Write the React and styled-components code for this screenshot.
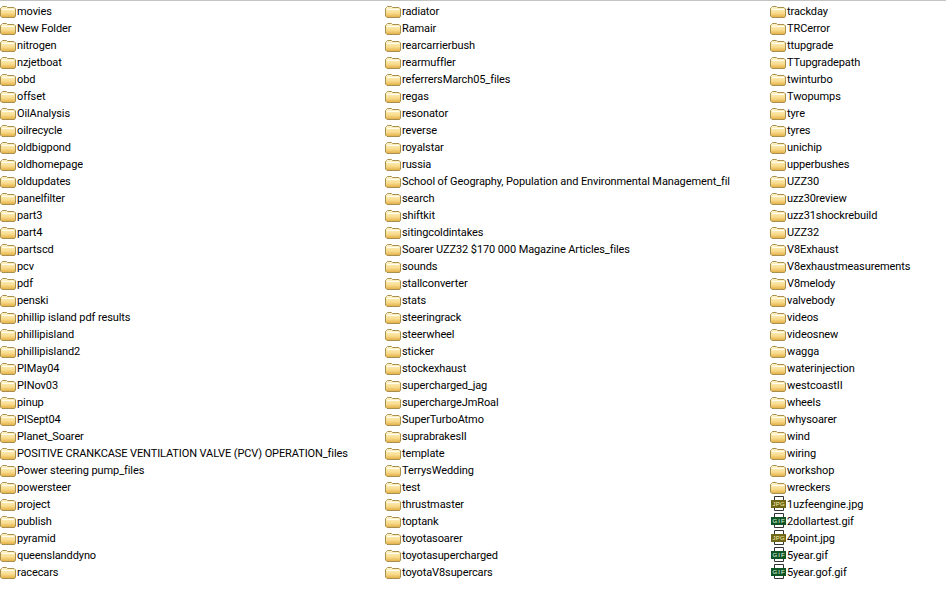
import React from 'react';
import styled, { createGlobalStyle } from 'styled-components';

const col1 = ['movies','New Folder','nitrogen','nzjetboat','obd','offset','OilAnalysis','oilrecycle','oldbigpond','oldhomepage','oldupdates','panelfilter','part3','part4','partscd','pcv','pdf','penski','phillip island pdf results','phillipisland','phillipisland2','PIMay04','PINov03','pinup','PISept04','Planet_Soarer','POSITIVE CRANKCASE VENTILATION VALVE (PCV) OPERATION_files','Power steering pump_files','powersteer','project','publish','pyramid','queenslanddyno','racecars'];
const col2 = ['radiator','Ramair','rearcarrierbush','rearmuffler','referrersMarch05_files','regas','resonator','reverse','royalstar','russia','School of Geography, Population and Environmental Management_fil','search','shiftkit','sitingcoldintakes','Soarer UZZ32 $170 000 Magazine Articles_files','sounds','stallconverter','stats','steeringrack','steerwheel','sticker','stockexhaust','supercharged_jag','superchargeJmRoal','SuperTurboAtmo','suprabrakesII','template','TerrysWedding','test','thrustmaster','toptank','toyotasoarer','toyotasupercharged','toyotaV8supercars'];
const col3 = ['trackday','TRCerror','ttupgrade','TTupgradepath','twinturbo','Twopumps','tyre','tyres','unichip','upperbushes','UZZ30','uzz30review','uzz31shockrebuild','UZZ32','V8Exhaust','V8exhaustmeasurements','V8melody','valvebody','videos','videosnew','wagga','waterinjection','westcoastII','wheels','whysoarer','wind','wiring','workshop','wreckers','1uzfeengine.jpg','2dollartest.gif','4point.jpg','5year.gif','5year.gof.gif'];

const GlobalStyle = createGlobalStyle`
  html, body { margin: 0; padding: 0; background: #fff; }
`;

const Page = styled.div`
  width: 946px;
  height: 592px;
  box-sizing: border-box;
  border-top: 1px solid #c4c4c0;
  padding-top: 2px;
  overflow: hidden;
  display: grid;
  grid-template-columns: 385px 385px 176px;
  font-family: Roboto, "Liberation Sans", Arial, sans-serif;
  font-size: 11px;
  letter-spacing: -0.1px;
  color: #000;
`;

const Column = styled.div`
  display: flex;
  flex-direction: column;
`;

const Row = styled.div`
  height: 17px;
  display: flex;
  align-items: center;
  white-space: nowrap;
`;

const Icon = styled.svg`
  flex: none;
  width: 16px;
  height: 16px;
  margin-bottom: 1px;
`;

const Label = styled.span`
  margin-left: 1px;
`;

const FolderIcon = () => (
  <Icon viewBox="0 0 16 16">
    <defs>
      <linearGradient id="fold" x1="0" y1="0" x2="0" y2="1">
        <stop offset="0" stopColor="#fff6cf" />
        <stop offset=".6" stopColor="#f8dc8e" />
        <stop offset="1" stopColor="#e3ac42" />
      </linearGradient>
    </defs>
    <path d="M1.5 4.5 L2.5 3.5 H6.5 L7.5 4.5 H14 L15.5 6 V13 L14.5 14.5 H2 L.5 13 V5.5 Z" fill="url(#fold)" stroke="#a8914f" />
    <path d="M2 6.5 H14" stroke="#fffdf0" fill="none" />
  </Icon>
);

const FileIcon = ({ ext }) => {
  const jpg = ext === 'jpg';
  return (
    <Icon viewBox="0 0 16 16">
      <path d="M4.5 .5 H13.5 V14.5 H4.5 Z" fill="#fff" stroke="#333" />
      <rect x="1" y="4" width="15" height="8" fill={jpg ? '#6f6618' : '#0f5524'} />
      <text x="2.5" y="10" textLength="12" lengthAdjust="spacing" fontSize="6" fontFamily="Liberation Sans, sans-serif" fill={jpg ? '#fff6b0' : '#e4ffe4'}>
        {ext.toUpperCase()}
      </text>
    </Icon>
  );
};

const Item = ({ name }) => {
  const ext = name.match(/\.(jpg|gif)$/);
  return (
    <Row>
      {ext ? <FileIcon ext={ext[1]} /> : <FolderIcon />}
      <Label>{name}</Label>
    </Row>
  );
};

export default function App() {
  return (
    <>
      <GlobalStyle />
      <Page>
        {[col1, col2, col3].map((col, i) => (
          <Column key={i}>
            {col.map((name) => <Item key={name} name={name} />)}
          </Column>
        ))}
      </Page>
    </>
  );
}
